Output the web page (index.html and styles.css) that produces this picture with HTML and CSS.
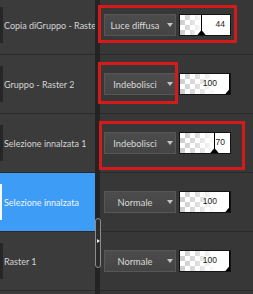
FILE: index.html
```html
<!DOCTYPE html>
<html lang="it">
<head>
<meta charset="utf-8">
<title>Livelli</title>
<link rel="stylesheet" href="styles.css">
</head>
<body>
<div class="palette">
  <div class="names">
    <div class="row"><span class="thumb"></span><span class="name">Copia diGruppo - Raste</span></div>
    <div class="row"><span class="thumb"></span><span class="name">Gruppo - Raster 2</span></div>
    <div class="row"><span class="thumb"></span><span class="name">Selezione innalzata 1</span></div>
    <div class="row sel"><span class="thumb"></span><span class="name">Selezione innalzata</span></div>
    <div class="row"><span class="thumb"></span><span class="name">Raster 1</span></div>
    <div class="row"></div>
  </div>
  <div class="splitter"><div class="handle"><span class="tri"></span></div></div>
  <div class="props">
    <div class="row">
      <div class="blend"><span class="bt">Luce diffusa</span><span class="arrow"></span></div>
      <div class="opac slider" style="--v:44%"><span class="num">44</span></div>
    </div>
    <div class="row">
      <div class="blend"><span class="bt">Indebolisci</span><span class="arrow"></span></div>
      <div class="opac full" style="--v:100%"><span class="num">100</span></div>
    </div>
    <div class="row">
      <div class="blend"><span class="bt">Indebolisci</span><span class="arrow"></span></div>
      <div class="opac slider" style="--v:70%"><span class="num">70</span></div>
    </div>
    <div class="row">
      <div class="blend"><span class="bt">Normale</span><span class="arrow"></span></div>
      <div class="opac full" style="--v:100%"><span class="num">100</span></div>
    </div>
    <div class="row">
      <div class="blend"><span class="bt">Normale</span><span class="arrow"></span></div>
      <div class="opac full" style="--v:100%"><span class="num">100</span></div>
    </div>
    <div class="row"></div>
  </div>
  <div class="mark m1"></div>
  <div class="mark m2"></div>
  <div class="mark m3"></div>
</div>
</body>
</html>
```
FILE: styles.css
```css
html, body {
  margin: 0;
  padding: 0;
  background: #2d2d2d;
  overflow: hidden;
  height: 294px;
}
.palette {
  position: relative;
  display: flex;
  margin-top: -4px;
  height: 298px;
  overflow: hidden;
  font-family: Lato, "Liberation Sans", sans-serif;
  font-size: 9.3px;
}
.row {
  height: 58px;
  border-bottom: 1px solid #2a2a2a;
  display: flex;
  align-items: center;
  box-sizing: content-box;
}
.names {
  width: 95px;
  flex: none;
  font-size: 9px;
}
.names .row {
  background: #3b3b3b;
}
.thumb {
  width: 3px;
  height: 36px;
  background: #262626;
  margin-right: 1px;
  flex: none;
}
.name {
  color: #d4d4d4;
  white-space: nowrap;
  overflow: hidden;
}
.names .sel {
  background: #3d9cf6;
}
.sel .thumb {
  background: #f4f8fc;
  width: 2px;
  margin-right: 2px;
}
.sel .name {
  color: #eef5ff;
}
.splitter {
  width: 5px;
  flex: none;
  background: #232323;
  position: relative;
}
.handle {
  position: absolute;
  left: 0;
  top: 222px;
  width: 6px;
  height: 50px;
  box-sizing: border-box;
  border: 1px solid #8c8c8c;
  border-radius: 3px;
  background: #2c2c2c;
}
.tri {
  position: absolute;
  left: 1px;
  top: 20px;
  border-top: 2.5px solid transparent;
  border-bottom: 2.5px solid transparent;
  border-left: 3px solid #f0f0f0;
}
.props {
  flex: 1;
}
.props .row {
  background: #373737;
  padding-left: 4px;
  gap: 3px;
}
.blend {
  width: 72px;
  height: 22px;
  box-sizing: border-box;
  border: 1px solid #575757;
  background: linear-gradient(#4c4c4c, #444444);
  display: flex;
  align-items: center;
}
.bt {
  flex: 1;
  text-align: center;
  color: #dadada;
  white-space: nowrap;
}
.arrow {
  width: 0;
  height: 0;
  border-left: 3.5px solid transparent;
  border-right: 3.5px solid transparent;
  border-top: 4px solid #c4c4c4;
  margin-right: 2px;
  margin-left: 2px;
}
.opac {
  position: relative;
  width: 52px;
  height: 22px;
  box-sizing: border-box;
  border: 1px solid #141414;
  overflow: hidden;
  background:
    linear-gradient(to right, rgba(255,255,255,0) 0, rgba(255,255,255,0.35) calc(min(var(--v), 72%) * 0.5), #fff min(var(--v), 72%)),
    conic-gradient(#cdcdcd 25%, #ffffff 0 50%, #cdcdcd 0 75%, #ffffff 0) 0 0 / 10px 10px;
  font-family: "Liberation Sans", Arial, sans-serif;
  font-size: 8.5px;
  color: #1c1c1c;
  display: flex;
  justify-content: flex-end;
  align-items: flex-start;
}
.opac::before {
  content: "";
  position: absolute;
  top: 0;
  bottom: 0;
  left: var(--v);
  width: 1px;
  margin-left: -1px;
  background: #000;
}
.opac::after {
  content: "";
  position: absolute;
  bottom: -1px;
  left: var(--v);
  width: 10px;
  height: 6px;
  margin-left: -5.5px;
  background: #000;
  clip-path: polygon(50% 0, 100% 100%, 0 100%);
}
.num {
  position: relative;
  z-index: 1;
  padding-top: 4px;
  line-height: 10px;
  padding-right: 5px;
}
.full .num {
  padding-right: 13px;
}
.mark {
  position: absolute;
  border: 3px solid #d41a1a;
  box-sizing: border-box;
}
.m1 { left: 98px; top: 9px; width: 139px; height: 38px; }
.m2 { left: 98px; top: 66px; width: 80px; height: 42px; }
.m3 { left: 99px; top: 125px; width: 146px; height: 49px; }
```
